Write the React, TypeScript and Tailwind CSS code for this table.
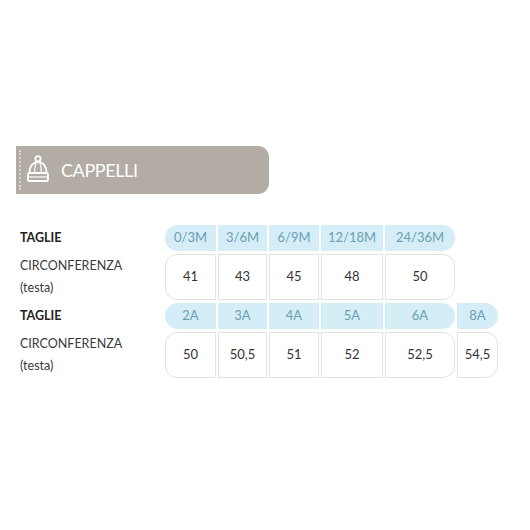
import React from 'react';

const cols = ['w-[51px]', 'w-[49px]', 'w-[50px]', 'w-[62px]', 'w-[70px]', 'w-[41px]'];

type Group = { start: number; items: string[] };

const rows: { label: string; header: Group[]; values: Group[] }[] = [
  {
    label: 'TAGLIE',
    header: [{ start: 0, items: ['0/3M', '3/6M', '6/9M', '12/18M', '24/36M'] }],
    values: [{ start: 0, items: ['41', '43', '45', '48', '50'] }],
  },
  {
    label: 'TAGLIE',
    header: [
      { start: 0, items: ['2A', '3A', '4A', '5A', '6A'] },
      { start: 5, items: ['8A'] },
    ],
    values: [
      { start: 0, items: ['50', '50,5', '51', '52', '52,5'] },
      { start: 5, items: ['54,5'] },
    ],
  },
];

function HatIcon() {
  return (
    <svg width="22" height="28" viewBox="0 0 22 28" fill="none" stroke="white" strokeWidth="1.8" strokeLinejoin="round">
      <circle cx="11" cy="3.8" r="2.6" />
      <path d="M2.5 18 C2.5 10.5 6.5 7 11 7 C15.5 7 19.5 10.5 19.5 18" />
      <path d="M9 8 C8 11 7.6 14 7.6 18 M13 8 C14 11 14.4 14 14.4 18" strokeWidth="1.2" />
      <rect x="1" y="18" width="20" height="8" rx="1.5" />
      <path d="M1 22 H21" strokeWidth="1.2" />
    </svg>
  );
}

function HeaderCell({ text, first, last, col }: { text: string; first: boolean; last: boolean; col: number }) {
  return (
    <div
      className={`${cols[col]} h-[26px] flex items-center justify-center bg-[#d5edf7] text-[#6a9fb3] text-[13px] ${first ? 'rounded-l-[13px]' : ''} ${last ? 'rounded-r-[13px]' : ''}`}
    >
      {text}
    </div>
  );
}

function ValueCell({ text, first, last, col }: { text: string; first: boolean; last: boolean; col: number }) {
  return (
    <div
      className={`${cols[col]} h-[46px] flex items-center justify-center bg-white border border-[#e2e2e2] text-[#333] text-[13px] ${first ? 'rounded-l-[12px]' : ''} ${last ? 'rounded-r-[12px]' : ''}`}
    >
      {text}
    </div>
  );
}

function CellRow({ groups, kind }: { groups: Group[]; kind: 'h' | 'v' }) {
  return (
    <div className="flex gap-[2px]">
      {groups.map((g, gi) =>
        g.items.map((t, i) => {
          const Cell = kind === 'h' ? HeaderCell : ValueCell;
          return (
            <Cell
              key={`${gi}-${i}`}
              text={t}
              col={g.start + i}
              first={g.start === 0 && i === 0}
              last={i === g.items.length - 1}
            />
          );
        })
      )}
    </div>
  );
}

export default function App() {
  return (
    <div className="w-[530px] h-[530px] bg-white overflow-hidden" style={{ fontFamily: 'Lato, "Open Sans", sans-serif' }}>
      <div className="pt-[146px] pl-[16px]">
        <div className="w-[253px] h-[48px] bg-[#b2aca4] rounded-r-[11px] flex items-center">
          <div className="ml-[3px] h-[40px] border-l-2 border-dotted border-white/50" />
          <div className="ml-[6px] mt-[-2px]">
            <HatIcon />
          </div>
          <span className="ml-[12px] text-white text-[18px] tracking-[-0.4px]">CAPPELLI</span>
        </div>
      </div>

      <div className="mt-[31px] flex flex-col gap-[3px]">
        {rows.map((r, ri) => (
          <React.Fragment key={ri}>
            <div className="flex">
              <div className="w-[165px] pl-[20px] flex items-center text-[12.5px] font-bold text-[#222]">{r.label}</div>
              <CellRow groups={r.header} kind="h" />
            </div>
            <div className="flex">
              <div className="w-[165px] pl-[20px] flex flex-col justify-center text-[12.5px] leading-[22px] text-[#3a3a3a]">
                <span>CIRCONFERENZA</span>
                <span>(testa)</span>
              </div>
              <CellRow groups={r.values} kind="v" />
            </div>
          </React.Fragment>
        ))}
      </div>
    </div>
  );
}
